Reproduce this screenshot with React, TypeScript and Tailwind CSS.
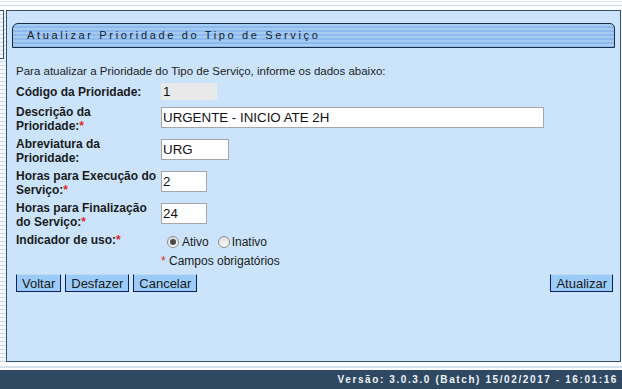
import React from 'react';

const label = 'w-[143px] shrink-0 text-[12px] leading-[14px] font-bold text-[#1b1b1b]';
const input =
  'ml-[2px] mt-[2px] h-[21px] border border-[#a6a6a6] bg-white pl-[1px] text-[13.33px] text-[#111] outline-none';
const button =
  'h-[18px] border border-t-[#bcdcfb] border-x-[#0c1f5e] border-b-[#0c1f5e] bg-[#9ccbf7] px-[5px] text-[13px] leading-[15px] text-[#1a1a1a]';

function Req() {
  return <span className="text-[#e0282c]">*</span>;
}

function Radio({ checked }: { checked?: boolean }) {
  return (
    <span className="flex h-[12px] w-[12px] items-center justify-center rounded-full border border-[#8e8e8e] bg-[linear-gradient(#dcdcdc,#fbfbfb)]">
      {checked && <span className="h-[6px] w-[6px] rounded-full bg-[#4a4a4a]" />}
    </span>
  );
}

export default function App() {
  return (
    <div className="flex h-[389px] w-[622px] flex-col overflow-hidden bg-white font-['Liberation_Sans',Arial,sans-serif]">
      {/* top strip */}
      <div className="h-[10px] shrink-0">
        <div className="mt-[1px] h-px bg-[#d9e5f0]" />
        <div className="mt-[3px] h-px bg-[#c7d8e9]" />
      </div>

      <div className="flex min-h-0 flex-1">
        {/* left strip */}
        <div className="flex w-[6px] shrink-0 flex-col bg-[repeating-linear-gradient(to_bottom,#f3f7fb_0px,#f3f7fb_3px,#c8daec_3px,#c8daec_4px)]">
          <div className="h-[49px] w-[4px] border-y border-r border-[#3a5068] bg-[repeating-linear-gradient(to_bottom,#f3f7fb_0px,#f3f7fb_3px,#c8daec_3px,#c8daec_4px)]" />
        </div>

        {/* panel */}
        <div className="mr-[1px] flex flex-1 flex-col border border-[#34506a] bg-[#cbe4fc] pt-[12px]">
          <div className="mx-[5px] flex h-[25px] items-center rounded-tl-[6px] rounded-tr-[5px] border border-[#1c2b44] bg-[repeating-linear-gradient(to_bottom,#a6ccf3_0px,#a6ccf3_2px,#8cbaed_2px,#8cbaed_4px)] pl-[14px] text-[11px] tracking-[2.65px] text-[#18222f]">
            Atualizar Prioridade do Tipo de Serviço
          </div>

          <div className="flex flex-col pl-[9px] pr-[7px]">
            <p className="mt-[16px] text-[11.5px] leading-[14px] text-[#222]">
              Para atualizar a Prioridade do Tipo de Serviço, informe os dados abaixo:
            </p>

            <div className="mt-[5px] flex h-[17px] items-center">
              <span className={label}>Código da Prioridade:</span>
              <span className="ml-[2px] h-[17px] w-[56px] bg-[#e9e9e9] pl-[2px] text-[13.33px] leading-[17px] text-[#111]">
                1
              </span>
            </div>

            <div className="mt-[5px] flex items-start">
              <span className={label}>
                Descrição da Prioridade:<Req />
              </span>
              <input className={`${input} w-[383px]`} defaultValue="URGENTE - INICIO ATE 2H" />
            </div>

            <div className="mt-[4px] flex items-start">
              <span className={label}>Abreviatura da Prioridade:</span>
              <input className={`${input} h-[20px] w-[68px]`} defaultValue="URG" />
            </div>

            <div className="mt-[4px] flex items-start">
              <span className={label}>
                Horas para Execução do Serviço:<Req />
              </span>
              <input className={`${input} w-[46px]`} defaultValue="2" />
            </div>

            <div className="mt-[4px] flex items-start">
              <span className={label}>
                Horas para Finalização do Serviço:<Req />
              </span>
              <input className={`${input} w-[46px]`} defaultValue="24" />
            </div>

            <div className="mt-[4px] flex items-start">
              <span className={label}>
                Indicador de uso:<Req />
              </span>
              <div className="ml-[2px] mt-[2px] flex h-[14px] items-center pl-[6px] text-[12px] text-[#1b1b1b]">
                <Radio checked />
                <span className="ml-[3px]">Ativo</span>
                <span className="ml-[9px]">
                  <Radio />
                </span>
                <span className="ml-[2px]">Inativo</span>
              </div>
            </div>

            <p className="mt-[5px] pl-[145px] text-[12px] leading-[14px] text-[#1b1b1b]">
              <span className="text-[#e0282c]">*</span> Campos obrigatórios
            </p>

            <div className="mt-[6px] flex items-center">
              <div className="flex gap-[4px]">
                <button className={button}>Voltar</button>
                <button className={button}>Desfazer</button>
                <button className={button}>Cancelar</button>
              </div>
              <button className={`${button} ml-auto`}>Atualizar</button>
            </div>
          </div>
        </div>
      </div>

      {/* gap strip */}
      <div className="h-[8px] shrink-0">
        <div className="mt-[4px] h-[2px] bg-[#d3e1ee]" />
      </div>

      {/* footer */}
      <div className="flex h-[19px] shrink-0 items-center justify-end bg-[#2f4962] pr-[4px] text-[10px] font-bold tracking-[1.6px] text-[#eef2f6]">
        Versão: 3.0.3.0 (Batch) 15/02/2017 - 16:01:16
      </div>
    </div>
  );
}
